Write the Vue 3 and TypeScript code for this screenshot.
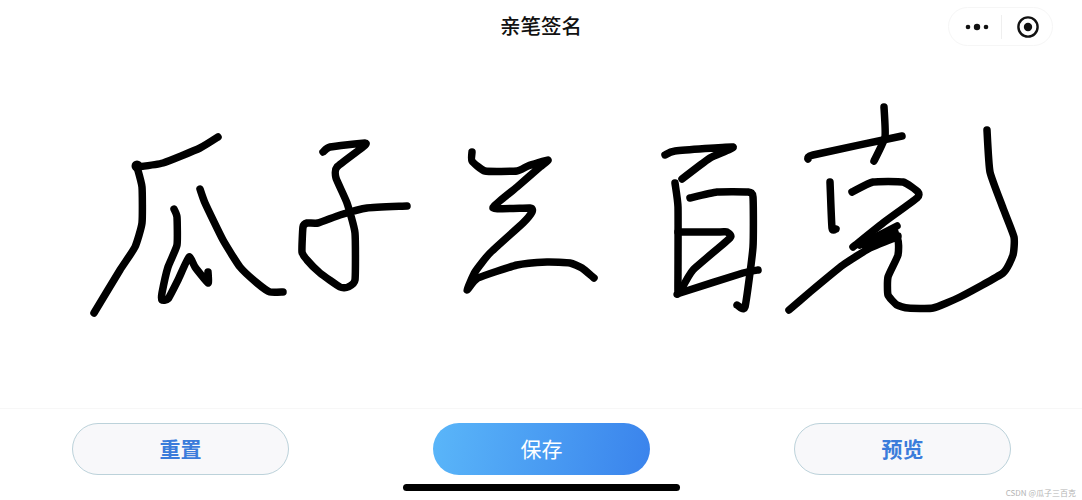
<script setup lang="ts">
const strokes: number[][] = [
  [218,137,200,148,163,163,137,167],
  [137,167,142,187,142,223,135,247,120,270,94,313],
  [174,209,177,217,177,245,168,267,162,293,162,300,168,299,178,280,189,257,195,267,208,283,208,272],
  [200,189,205,203,223,240,240,267,257,283,270,292,283,292],
  [323,152,330,147,365,143,363,147,337,167,336,178,347,203,355,233,355,280,348,287,340,287,320,273,307,260,302,252,303,227,307,223,318,223,340,215,367,208,407,206],
  [472,152,472,161,485,171,517,171,528,166,548,160,540,167,517,187,493,208,530,208,532,212,523,223,490,253,475,272,467,290,478,278,517,265,547,262,570,263,582,268,594,278],
  [665,155,675,151,733,147,710,158,682,179],
  [675,183,678,207,678,270,678,293,680,293,743,273,758,270],
  [690,198,717,192,748,192,753,197,753,247,745,307,737,305],
  [678,232,720,232,727,232,730,238,693,270,680,292],
  [884,107,885,137,874,161],
  [808,159,813,155,902,136],
  [830,182,832,228,836,229],
  [852,192,873,182,903,182,918,192,917,198,883,223,853,247],
  [860,245,897,226],
  [865,246,895,232],
  [870,240,898,236],
  [789,310,810,292,843,265,870,248,897,238,898,255,888,277,888,295,897,305,908,308,933,308,960,297,1003,273,1013,255,1014,237,1003,208,990,172,987,130],
]
const k = 0.08
const toPath = (p: number[]): string => {
  const n = p.length / 2
  const x = (i: number) => p[2 * Math.max(0, Math.min(n - 1, i))]
  const y = (i: number) => p[2 * Math.max(0, Math.min(n - 1, i)) + 1]
  let d = `M${x(0)} ${y(0)}`
  for (let i = 0; i < n - 1; i++) {
    const c1x = x(i) + (x(i + 1) - x(i - 1)) * k
    const c1y = y(i) + (y(i + 1) - y(i - 1)) * k
    const c2x = x(i + 1) - (x(i + 2) - x(i)) * k
    const c2y = y(i + 1) - (y(i + 2) - y(i)) * k
    d += ` C${c1x.toFixed(1)} ${c1y.toFixed(1)} ${c2x.toFixed(1)} ${c2y.toFixed(1)} ${x(i + 1)} ${y(i + 1)}`
  }
  return d
}
const paths = strokes.map(toPath)
</script>

<template>
  <div class="page">
    <header class="nav">
      <h1 class="title">亲笔签名</h1>
      <div class="capsule">
        <svg class="more" viewBox="0 0 24 8" width="24" height="8" aria-hidden="true">
          <circle cx="3" cy="4" r="2.3" />
          <circle cx="12" cy="4" r="3.2" />
          <circle cx="21" cy="4" r="2.3" />
        </svg>
        <span class="divider"></span>
        <svg class="target" viewBox="0 0 24 24" width="24" height="24" aria-hidden="true">
          <circle cx="12" cy="12" r="9.6" fill="none" stroke="#111" stroke-width="2.4" />
          <circle cx="12" cy="12" r="4.2" fill="#111" />
        </svg>
      </div>
    </header>
    <main class="canvas">
      <svg class="signature" viewBox="0 54 1082 354" aria-label="手写签名">
        <path v-for="(d, i) in paths" :key="i" :d="d" />
        <circle class="dot" cx="137" cy="166" r="5.5" />
      </svg>
    </main>
    <footer class="footer">
      <div class="actions">
        <button class="btn">重置</button>
        <button class="btn primary">保存</button>
        <button class="btn">预览</button>
      </div>
      <div class="home"></div>
    </footer>
    <span class="mark">CSDN @瓜子三百克</span>
  </div>
</template>

<style scoped>
.page {
  position: relative;
  width: 1082px;
  height: 500px;
  display: flex;
  flex-direction: column;
  background: #fff;
  overflow: hidden;
  font-family: "Noto Sans CJK SC", "Noto Sans", sans-serif;
}
.nav {
  position: relative;
  height: 54px;
  display: flex;
  align-items: center;
  justify-content: center;
  flex: none;
}
.title {
  margin: 0 0 4px;
  font-size: 20.5px;
  line-height: 28px;
  font-weight: 500;
  color: #111;
}
.capsule {
  position: absolute;
  right: 29px;
  top: 7px;
  width: 105px;
  height: 39px;
  box-sizing: border-box;
  border: 1px solid #f6f6f6;
  border-radius: 20px;
  display: flex;
  align-items: center;
  padding-left: 16px;
}
.more {
  fill: #111;
}
.divider {
  width: 1px;
  height: 24px;
  margin: 0 14px 0 12px;
  background: #efefef;
}
.canvas {
  flex: 1;
  min-height: 0;
}
.signature {
  display: block;
  width: 100%;
  height: 100%;
}
.signature path {
  fill: none;
  stroke: #000;
  stroke-width: 7.5;
  stroke-linecap: round;
  stroke-linejoin: round;
}
.dot {
  fill: #000;
}
.footer {
  flex: none;
  height: 92px;
  box-sizing: border-box;
  border-top: 1px solid #f7f7f7;
  padding-top: 14px;
  display: flex;
  flex-direction: column;
  align-items: center;
}
.actions {
  width: 100%;
  box-sizing: border-box;
  padding: 0 71px 0 72px;
  display: flex;
  justify-content: space-between;
}
.btn {
  width: 217px;
  height: 52px;
  box-sizing: border-box;
  border: 1px solid #bcd2da;
  border-radius: 26px;
  background: #f8f8fa;
  color: #3b7cdb;
  font-family: inherit;
  font-size: 21px;
  line-height: 28px;
  font-weight: 700;
  padding: 0 0 3px;
}
.primary {
  border: 0;
  background: linear-gradient(100deg, #5ab6f9, #3a83ec);
  color: #fff;
  font-weight: 400;
}
.home {
  width: 277px;
  height: 7px;
  margin-top: 9px;
  border-radius: 4px;
  background: #000;
}
.mark {
  position: absolute;
  right: 6px;
  bottom: 1px;
  font-size: 8px;
  line-height: 12px;
  color: #b4b4b4;
}
</style>
